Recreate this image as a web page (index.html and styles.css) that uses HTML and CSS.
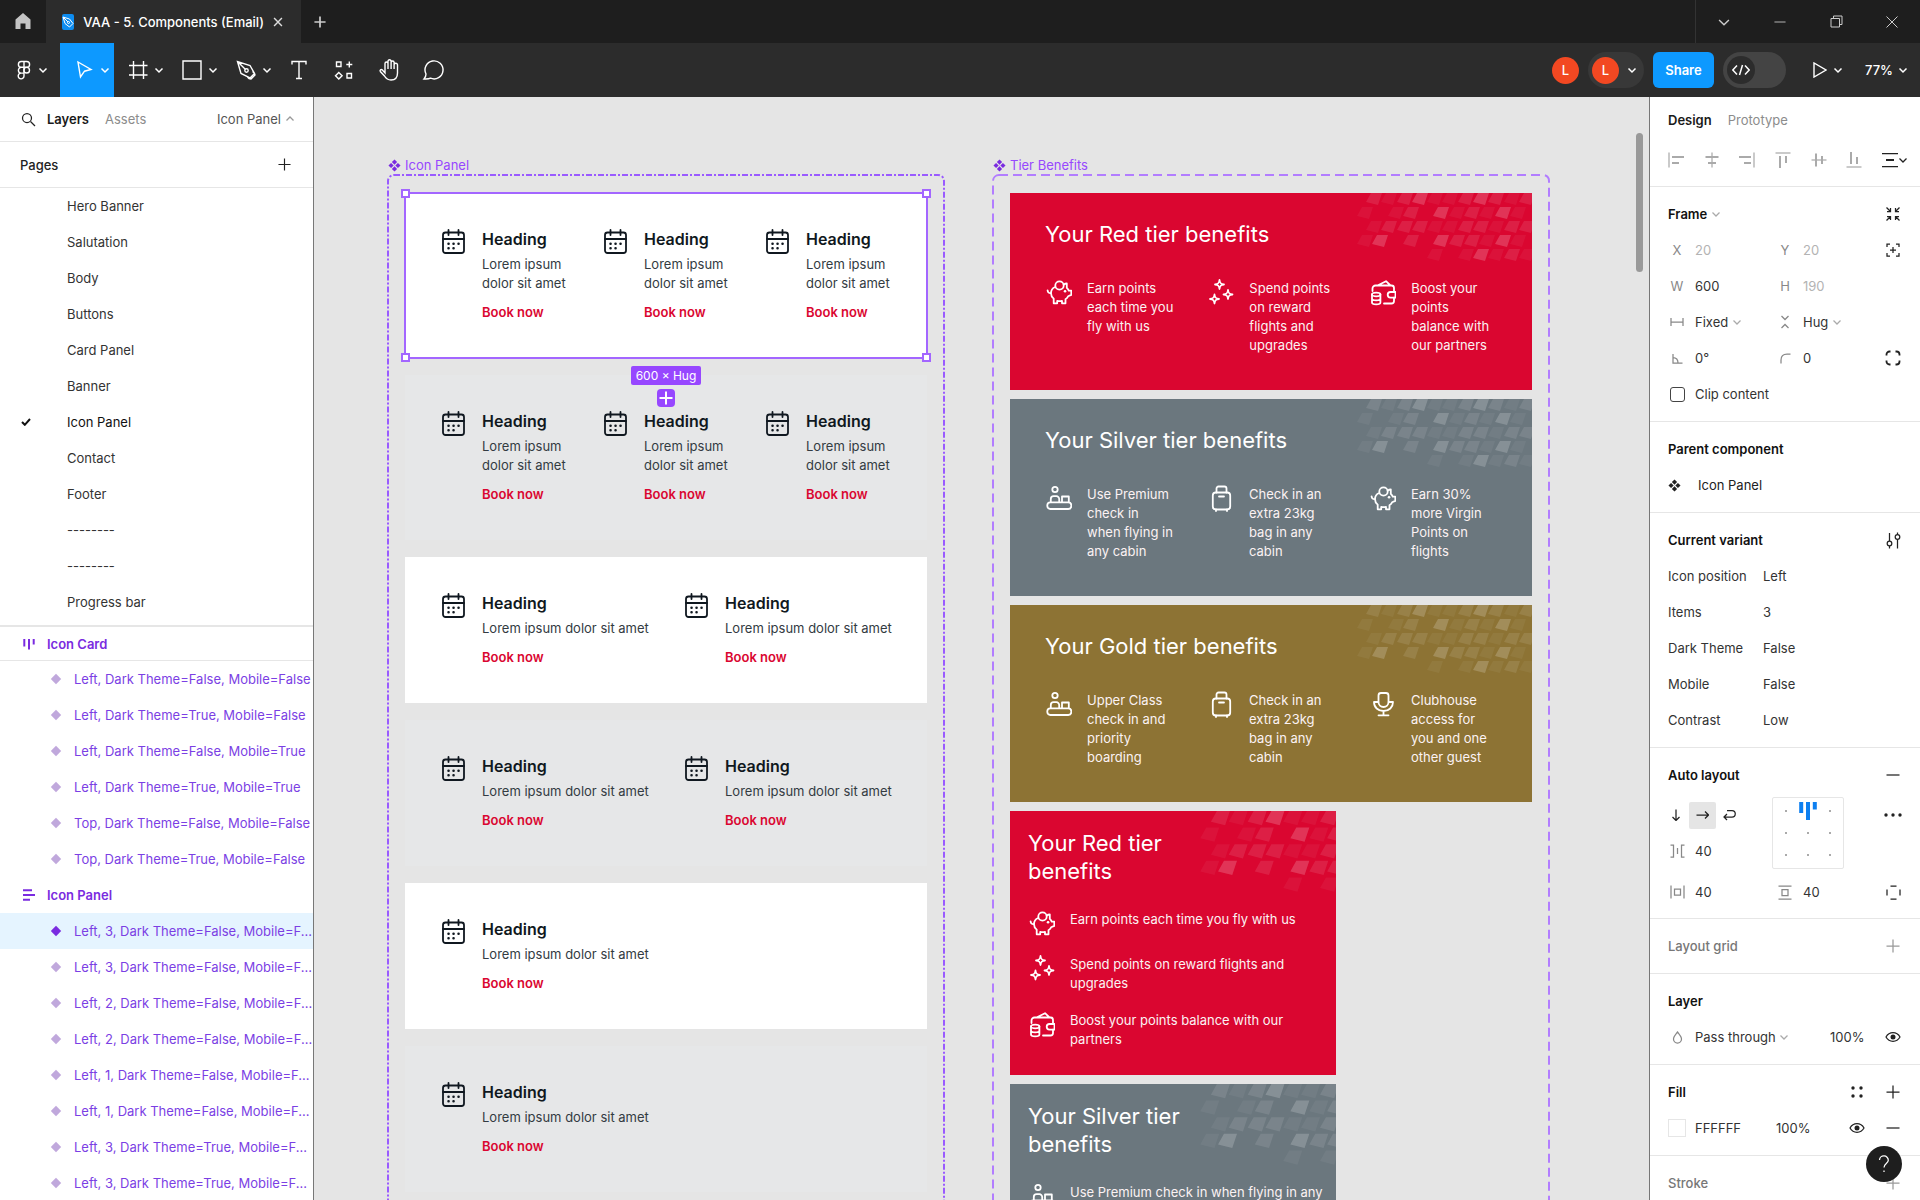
FILE: index.html
```
<!DOCTYPE html>
<html lang="en">
<head>
<meta charset="utf-8">
<title>VAA - 5. Components (Email)</title>
<link rel="stylesheet" href="styles.css">
</head>
<body>
<svg class="sprite" aria-hidden="true">
  <symbol id="chev" viewBox="0 0 10 10"><path d="M1.5 3.5 5 7l3.5-3.5"/></symbol>
  <symbol id="caret-up" viewBox="0 0 10 10"><path d="M1.5 6.5 5 3l3.5 3.5"/></symbol>
  <symbol id="plus" viewBox="0 0 14 14"><path d="M7 .5v13M.5 7h13"/></symbol>
  <symbol id="minus" viewBox="0 0 14 14"><path d="M.5 7h13"/></symbol>
  <symbol id="close" viewBox="0 0 14 14"><path d="m1.500 1.500 11 11m0-11-11 11"/></symbol>
  <symbol id="component" viewBox="0 0 14 14"><path class="solid" d="m7 .5 2.800 2.800L7 6.100 4.200 3.300zM7 7.900l2.800 2.800L7 13.500l-2.800-2.800zM3.300 4.200 6.100 7 3.300 9.800.5 7zM10.700 4.200 13.500 7l-2.800 2.800L7.900 7z"/></symbol>
  <symbol id="diamond" viewBox="0 0 12 12"><path class="solid" d="m6 .8 5.200 5.200L6 11.200.8 6z"/></symbol>
  <symbol id="eye" viewBox="0 0 16 12"><path d="M1 6c1.600-2.800 4-4.300 7-4.300S13.400 3.200 15 6c-1.600 2.800-4 4.300-7 4.300S2.600 8.800 1 6z"/><circle class="solid" cx="8" cy="6" r="2.500"/></symbol>
  <symbol id="calendar" viewBox="-.5 -1 27 27"><rect x="2.500" y="4.500" width="21" height="20.500" rx="2.500"/><path d="M2.500 11h21M8 2v5M18 2v5"/><path class="dots" d="M8 15.800h.1M13 15.800h.1M18 15.800h.1M8 20.300h.1M13 20.300h.1"/></symbol>
  <symbol id="piggy" viewBox="-1 0 27 27"><circle cx="13.500" cy="6.500" r="4.200"/><path d="M9.300 8C6.500 9 5 11.700 5 14.300c0 2.200 1 4 2.700 5.300v4.700h3.500v-2.400c1.500.3 3.300.3 4.800 0v2.400h3.500v-4.100c1.200-.8 2-1.700 2.600-2.900l3.200-1.400v-4.200h-2.500c-.5-1.300-1.100-2-2-2.900V4.500c-1.200 0-2.200.4-3.100 1.200M5 14c-2 .3-3.200-.5-3.400-2.600"/><path class="dots" d="M19 12.300h.1"/></symbol>
  <symbol id="sparkles" viewBox="-1 0 27 27"><path d="M11.500 1c.4 3.200 1.300 4.100 4.500 4.500-3.200.4-4.100 1.300-4.500 4.500-.4-3.200-1.300-4.100-4.500-4.500 3.200-.4 4.100-1.300 4.500-4.500zM20 11c.4 3.200 1.300 4.100 4.500 4.500-3.200.4-4.100 1.300-4.500 4.500-.4-3.200-1.300-4.100-4.500-4.500 3.200-.4 4.100-1.300 4.500-4.500zM6.500 15.500c.4 3.200 1.300 4.100 4.500 4.500-3.200.4-4.100 1.300-4.500 4.500-.4-3.200-1.300-4.100-4.500-4.500 3.200-.4 4.100-1.300 4.500-4.500z"/></symbol>
  <symbol id="wallet" viewBox="-1 0 27 27"><path d="M2.500 12V9.500a3 3 0 0 1 3-3h16a2.500 2.500 0 0 1 2.500 2.500v4M24 18.500V22a2.500 2.500 0 0 1-2.500 2.500H14M7.500 6.500 16 2.200l4.500 4.300M25.500 13h-5a2.800 2.800 0 0 0 0 5.600h5z"/><ellipse cx="6.200" cy="15.500" rx="4.200" ry="1.800"/><path d="M2 15.500v8c0 2.500 8.400 2.500 8.400 0v-8M2 19.500c0 2.500 8.400 2.500 8.400 0"/></symbol>
  <symbol id="desk" viewBox="-1 0 27 27"><circle cx="9" cy="4.500" r="2.700"/><rect x="1.300" y="17.300" width="24" height="6.700" rx="3"/><path d="M4.800 17v-3a2.800 2.800 0 0 1 2.800-2.800h2.800a2.800 2.800 0 0 1 2.800 2.800v3M16 17v-5.500h6.800V17"/></symbol>
  <symbol id="suitcase" viewBox="-1 0 27 27"><path d="M8.500 7.500v-4a2 2 0 0 1 2-2h6a2 2 0 0 1 2 2v4M11 11.500h5M8 24.500V26M19 24.500V26"/><rect x="4.800" y="7.500" width="17.400" height="17" rx="3"/></symbol>
  <symbol id="mic" viewBox="-1 0 27 27"><path d="M8.500 4.500a2.500 2.500 0 0 1 2.500-2.500h5a2.500 2.500 0 0 1 2.500 2.500V11a5 5 0 0 1-10 0z"/><path d="M8.300 11H4c0 5.300 4 9 9.500 9s9.500-3.700 9.500-9h-4.300M13.500 20v4.300M8.500 24.300h10"/></symbol>
  <symbol id="pattern" viewBox="0 0 175 70">
    <path class="dim" d="M29 0h11l-4 12-12-3zM75 0h11l-4 12-12-3zM90 0h11l-4 12-12-3zM152 0h11l-4 12-12-3zM5 14h11l-4 12-12-3zM36 14h11l-4 12-12-3zM97 14h11l-4 12-12-3zM127 14h11l-4 12-12-3zM158 14h11l-4 12-12-3zM14 28h11l-4 12-12-3zM75 28h11l-4 12-12-3zM90 28h11l-4 12-12-3zM136 28h11l-4 12-12-3zM5 42h11l-4 12-12-3zM127 42h11l-4 12-12-3zM158 42h11l-4 12-12-3zM75 56h11l-4 12-12-3zM106 56h11l-4 12-12-3zM136 56h11l-4 12-12-3zM167 56h11l-4 12-12-3z"/>
    <path class="mid" d="M14 0h11l-4 12-12-3zM45 0h11l-4 12-12-3zM106 0h11l-4 12-12-3zM136 0h11l-4 12-12-3zM167 0h11l-4 12-12-3zM51 14h11l-4 12-12-3zM112 14h11l-4 12-12-3zM29 28h11l-4 12-12-3zM45 28h11l-4 12-12-3zM60 28h11l-4 12-12-3zM106 28h11l-4 12-12-3zM121 28h11l-4 12-12-3zM152 28h11l-4 12-12-3zM167 28h11l-4 12-12-3zM51 42h11l-4 12-12-3zM97 42h11l-4 12-12-3zM112 42h11l-4 12-12-3zM152 56h11l-4 12-12-3z"/>
    <path class="bright" d="M60 0h11l-4 12-12-3zM121 0h11l-4 12-12-3zM81 14h11l-4 12-12-3zM143 14h11l-4 12-12-3zM20 42h11l-4 12-12-3zM81 42h11l-4 12-12-3zM143 42h11l-4 12-12-3zM121 56h11l-4 12-12-3z"/>
  </symbol>
</svg>

<header class="tabbar">
  <button class="home" aria-label="Home"><svg width="16" height="17" viewBox="0 0 16 17"><path d="M8 0 .5 6.500V16h5v-5.500h5V16h5V6.500z"/></svg></button>
  <div class="tab">
    <span class="file-icon"><svg width="12" height="12" viewBox="0 0 12 12"><path d="m1 1 2 6.500L7.500 11 11 7.500 7.500 3zM1.500 1.500l4.500 4.500"/><circle cx="6.500" cy="6.500" r="1"/></svg></span>
    <span>VAA - 5. Components (Email)</span>
    <button class="tab-close" aria-label="Close tab"><svg width="10" height="10"><use href="#close"/></svg></button>
  </div>
  <button class="new-tab" aria-label="New tab"><svg width="12" height="12"><use href="#plus"/></svg></button>
  <div class="window-controls">
    <button aria-label="Tabs"><svg width="14" height="14"><use href="#chev"/></svg></button>
    <button aria-label="Minimise"><svg width="12" height="12"><use href="#minus"/></svg></button>
    <button aria-label="Restore"><svg width="13" height="13" viewBox="0 0 13 13"><path d="M1 3.500h8.500V12H1zM3.500 3.500V1H12v8.500H9.500"/></svg></button>
    <button aria-label="Close"><svg width="14" height="14"><use href="#close"/></svg></button>
  </div>
</header>

<nav class="toolbar">
  <button class="tool main-menu" aria-label="Main menu"><svg class="glyph" width="24" height="24" viewBox="0 0 24 24"><path d="M12 3.500H9.300a2.900 2.900 0 0 0 0 5.800H12zM12 3.500h2.700a2.900 2.900 0 0 1 0 5.800H12zM12 9.300H9.300a2.900 2.900 0 0 0 0 5.800H12zM12 15.100H9.300a2.900 2.900 0 1 0 2.700 2.900z"/><circle cx="14.700" cy="12.200" r="2.800"/></svg><svg width="10" height="10"><use href="#chev"/></svg></button>
  <button class="tool active" aria-label="Move"><svg class="glyph" width="24" height="24" viewBox="0 0 24 24"><path d="m6 4 13 7.500-6.500 1.700L8.500 19z"/></svg><svg width="10" height="10"><use href="#chev"/></svg></button>
  <button class="tool" aria-label="Frame"><svg class="glyph" width="24" height="24" viewBox="0 0 24 24"><path d="M7.500 3v18M17.500 3v18M3 7.500h18.500M3 17h18.500"/></svg><svg width="10" height="10"><use href="#chev"/></svg></button>
  <button class="tool" aria-label="Rectangle"><svg class="glyph" width="24" height="24" viewBox="0 0 24 24"><path d="M3 3h18v18H3z"/></svg><svg width="10" height="10"><use href="#chev"/></svg></button>
  <button class="tool" aria-label="Pen"><svg class="glyph" width="24" height="24" viewBox="0 0 24 24"><path d="m3.500 3.500 3.500 12 9 4.500 4.500-4.500-4.500-8zM3.500 3.500l8 8M18.500 13.500c2 1.500 2.500 2.500 2.500 3.500l-4 4c-1.200 0-2.500-.5-3.500-2"/><circle cx="12.500" cy="12.500" r="1.700"/></svg><svg width="10" height="10"><use href="#chev"/></svg></button>
  <button class="tool single" aria-label="Text"><svg class="glyph" width="24" height="24" viewBox="0 0 24 24"><path d="M5 6.500v-3h14v3M12 3.500v17M9 20.500h6"/></svg></button>
  <button class="tool single" aria-label="Resources"><svg class="glyph" width="24" height="24" viewBox="0 0 24 24"><path d="M4.500 4h4.500v4.500H4.500zM15 15.500h4.500V20H15zM17.300 3.500v6M14.300 6.500h6M6.800 14.500l3.300 3.300-3.300 3.300-3.300-3.300z"/></svg></button>
  <button class="tool single" aria-label="Hand"><svg class="glyph" width="24" height="24" viewBox="0 0 24 24"><path d="M8 12V5.500a1.500 1.500 0 0 1 3 0V3a1.600 1.600 0 0 1 3.100 0v1.500a1.500 1.500 0 0 1 3 0V7a1.500 1.500 0 0 1 3.400 0v8c0 4-2 7-6.500 7-3.500 0-5-1.500-6.500-4L3.300 13.500c-.8-1.300.7-2.500 1.900-1.700L8 15zM11 5.500V11M14.100 4.500V11M17.100 7v4"/></svg></button>
  <button class="tool single" aria-label="Comment"><svg class="glyph" width="24" height="24" viewBox="0 0 24 24"><path d="M2 21c1.300-1.400 2-3 2-5a9 9 0 1 1 4.500 4.200C7 21 5 21.200 2 21z"/></svg></button>
  <div class="toolbar-right">
    <span class="avatar">L</span>
    <button class="avatar-group"><span class="avatar">L</span><svg width="10" height="10"><use href="#chev"/></svg></button>
    <button class="share">Share</button>
    <button class="dev-toggle" aria-label="Dev Mode"><span><svg width="18" height="12" viewBox="0 0 18 12"><path d="M5 1.500.8 6 5 10.500M13 1.500 17.200 6 13 10.500M10.500 1l-3 10"/></svg></span></button>
    <button class="present" aria-label="Present"><svg class="glyph" width="14" height="16" viewBox="0 0 14 16"><path d="M1 1v14l12-7z"/></svg><svg width="10" height="10"><use href="#chev"/></svg></button>
    <button class="zoom">77%<svg width="10" height="10"><use href="#chev"/></svg></button>
  </div>
</nav>

<div class="workspace">
  <aside class="left-panel">
    <div class="panel-tabs">
      <svg class="search" width="15" height="15" viewBox="0 0 15 15"><circle cx="6" cy="6" r="4.500"/><path d="m9.500 9.500 4.500 4.500"/></svg>
      <button class="current">Layers</button>
      <button>Assets</button>
      <button class="page-switch">Icon Panel<svg width="10" height="10"><use href="#caret-up"/></svg></button>
    </div>
    <div class="pages-title"><h2>Pages</h2><button aria-label="Add page"><svg width="13" height="13"><use href="#plus"/></svg></button></div>
    <ul class="pages">
      <li><a href="#">Hero Banner</a></li>
      <li><a href="#">Salutation</a></li>
      <li><a href="#">Body</a></li>
      <li><a href="#">Buttons</a></li>
      <li><a href="#">Card Panel</a></li>
      <li><a href="#">Banner</a></li>
      <li class="checked"><svg width="10" height="8" viewBox="0 0 10 8"><path d="m1 4 2.800 2.800L9 1"/></svg><a href="#">Icon Panel</a></li>
      <li><a href="#">Contact</a></li>
      <li><a href="#">Footer</a></li>
      <li><a href="#">--------</a></li>
      <li><a href="#">--------</a></li>
      <li><a href="#">Progress bar</a></li>
    </ul>
    <ul class="layers">
      <li class="group first"><svg width="12" height="12" viewBox="0 0 12 12"><path d="M1.300 1v7.500M6 1v10.500M10.700 1v5.500"/></svg><a href="#">Icon Card</a></li>
      <li><svg width="12" height="12"><use href="#diamond"/></svg><a href="#">Left, Dark Theme=False, Mobile=False</a></li>
      <li><svg width="12" height="12"><use href="#diamond"/></svg><a href="#">Left, Dark Theme=True, Mobile=False</a></li>
      <li><svg width="12" height="12"><use href="#diamond"/></svg><a href="#">Left, Dark Theme=False, Mobile=True</a></li>
      <li><svg width="12" height="12"><use href="#diamond"/></svg><a href="#">Left, Dark Theme=True, Mobile=True</a></li>
      <li><svg width="12" height="12"><use href="#diamond"/></svg><a href="#">Top, Dark Theme=False, Mobile=False</a></li>
      <li><svg width="12" height="12"><use href="#diamond"/></svg><a href="#">Top, Dark Theme=True, Mobile=False</a></li>
      <li class="group"><svg width="12" height="12" viewBox="0 0 12 12"><path d="M0 1.300h9M0 6h12M0 10.700h7"/></svg><a href="#">Icon Panel</a></li>
      <li class="selected"><svg width="12" height="12"><use href="#diamond"/></svg><a href="#">Left, 3, Dark Theme=False, Mobile=F...</a></li>
      <li><svg width="12" height="12"><use href="#diamond"/></svg><a href="#">Left, 3, Dark Theme=False, Mobile=F...</a></li>
      <li><svg width="12" height="12"><use href="#diamond"/></svg><a href="#">Left, 2, Dark Theme=False, Mobile=F...</a></li>
      <li><svg width="12" height="12"><use href="#diamond"/></svg><a href="#">Left, 2, Dark Theme=False, Mobile=F...</a></li>
      <li><svg width="12" height="12"><use href="#diamond"/></svg><a href="#">Left, 1, Dark Theme=False, Mobile=F...</a></li>
      <li><svg width="12" height="12"><use href="#diamond"/></svg><a href="#">Left, 1, Dark Theme=False, Mobile=F...</a></li>
      <li><svg width="12" height="12"><use href="#diamond"/></svg><a href="#">Left, 3, Dark Theme=True, Mobile=F...</a></li>
      <li><svg width="12" height="12"><use href="#diamond"/></svg><a href="#">Left, 3, Dark Theme=True, Mobile=F...</a></li>
    </ul>
  </aside>

  <main class="canvas">
    <section class="frame icon-frame">
      <h2 class="frame-label"><svg width="13" height="13"><use href="#component"/></svg>Icon Panel</h2>
      <div class="frame-body">
        <svg class="outline dense" width="100%" height="100%"><rect width="100%" height="100%" rx="6"/></svg>
        <article class="panel is-selected">
          <div class="item"><svg class="pic"><use href="#calendar"/></svg><div><h3>Heading</h3><p>Lorem ipsum<br>dolor sit amet</p><a href="#">Book now</a></div></div>
          <div class="item"><svg class="pic"><use href="#calendar"/></svg><div><h3>Heading</h3><p>Lorem ipsum<br>dolor sit amet</p><a href="#">Book now</a></div></div>
          <div class="item"><svg class="pic"><use href="#calendar"/></svg><div><h3>Heading</h3><p>Lorem ipsum<br>dolor sit amet</p><a href="#">Book now</a></div></div>
          <div class="selection"><i class="tl"></i><i class="tr"></i><i class="bl"></i><i class="br"></i></div>
          <div class="badges"><span class="size">600 × Hug</span><button class="add" aria-label="Add variant"><svg width="14" height="14"><use href="#plus"/></svg></button></div>
        </article>
        <article class="panel shaded">
          <div class="item"><svg class="pic"><use href="#calendar"/></svg><div><h3>Heading</h3><p>Lorem ipsum<br>dolor sit amet</p><a href="#">Book now</a></div></div>
          <div class="item"><svg class="pic"><use href="#calendar"/></svg><div><h3>Heading</h3><p>Lorem ipsum<br>dolor sit amet</p><a href="#">Book now</a></div></div>
          <div class="item"><svg class="pic"><use href="#calendar"/></svg><div><h3>Heading</h3><p>Lorem ipsum<br>dolor sit amet</p><a href="#">Book now</a></div></div>
        </article>
        <article class="panel">
          <div class="item"><svg class="pic"><use href="#calendar"/></svg><div><h3>Heading</h3><p>Lorem ipsum dolor sit amet</p><a href="#">Book now</a></div></div>
          <div class="item"><svg class="pic"><use href="#calendar"/></svg><div><h3>Heading</h3><p>Lorem ipsum dolor sit amet</p><a href="#">Book now</a></div></div>
        </article>
        <article class="panel shaded">
          <div class="item"><svg class="pic"><use href="#calendar"/></svg><div><h3>Heading</h3><p>Lorem ipsum dolor sit amet</p><a href="#">Book now</a></div></div>
          <div class="item"><svg class="pic"><use href="#calendar"/></svg><div><h3>Heading</h3><p>Lorem ipsum dolor sit amet</p><a href="#">Book now</a></div></div>
        </article>
        <article class="panel">
          <div class="item"><svg class="pic"><use href="#calendar"/></svg><div><h3>Heading</h3><p>Lorem ipsum dolor sit amet</p><a href="#">Book now</a></div></div>
        </article>
        <article class="panel shaded">
          <div class="item"><svg class="pic"><use href="#calendar"/></svg><div><h3>Heading</h3><p>Lorem ipsum dolor sit amet</p><a href="#">Book now</a></div></div>
        </article>
      </div>
    </section>

    <section class="frame tier-frame">
      <h2 class="frame-label"><svg width="13" height="13"><use href="#component"/></svg>Tier Benefits</h2>
      <div class="frame-body">
        <svg class="outline" width="100%" height="100%"><rect width="100%" height="100%" rx="6"/></svg>
        <article class="tier red">
          <svg class="pattern"><use href="#pattern"/></svg>
          <h3>Your Red tier benefits</h3>
          <div class="benefits">
            <div class="item"><svg class="pic"><use href="#piggy"/></svg><p>Earn points<br>each time you<br>fly with us</p></div>
            <div class="item"><svg class="pic"><use href="#sparkles"/></svg><p>Spend points<br>on reward<br>flights and<br>upgrades</p></div>
            <div class="item"><svg class="pic"><use href="#wallet"/></svg><p>Boost your<br>points<br>balance with<br>our partners</p></div>
          </div>
        </article>
        <article class="tier silver">
          <svg class="pattern"><use href="#pattern"/></svg>
          <h3>Your Silver tier benefits</h3>
          <div class="benefits">
            <div class="item"><svg class="pic"><use href="#desk"/></svg><p>Use Premium<br>check in<br>when flying in<br>any cabin</p></div>
            <div class="item"><svg class="pic"><use href="#suitcase"/></svg><p>Check in an<br>extra 23kg<br>bag in any<br>cabin</p></div>
            <div class="item"><svg class="pic"><use href="#piggy"/></svg><p>Earn 30%<br>more Virgin<br>Points on<br>flights</p></div>
          </div>
        </article>
        <article class="tier gold">
          <svg class="pattern"><use href="#pattern"/></svg>
          <h3>Your Gold tier benefits</h3>
          <div class="benefits">
            <div class="item"><svg class="pic"><use href="#desk"/></svg><p>Upper Class<br>check in and<br>priority<br>boarding</p></div>
            <div class="item"><svg class="pic"><use href="#suitcase"/></svg><p>Check in an<br>extra 23kg<br>bag in any<br>cabin</p></div>
            <div class="item"><svg class="pic"><use href="#mic"/></svg><p>Clubhouse<br>access for<br>you and one<br>other guest</p></div>
          </div>
        </article>
        <article class="tier mobile red">
          <svg class="pattern"><use href="#pattern"/></svg>
          <h3>Your Red tier<br>benefits</h3>
          <div class="benefits">
            <div class="item"><svg class="pic"><use href="#piggy"/></svg><p>Earn points each time you fly with us</p></div>
            <div class="item"><svg class="pic"><use href="#sparkles"/></svg><p>Spend points on reward flights and<br>upgrades</p></div>
            <div class="item"><svg class="pic"><use href="#wallet"/></svg><p>Boost your points balance with our<br>partners</p></div>
          </div>
        </article>
        <article class="tier mobile silver">
          <svg class="pattern"><use href="#pattern"/></svg>
          <h3>Your Silver tier<br>benefits</h3>
          <div class="benefits">
            <div class="item"><svg class="pic"><use href="#desk"/></svg><p>Use Premium check in when flying in any</p></div>
          </div>
        </article>
      </div>
    </section>
    <div class="scrollbar"></div>
  </main>

  <aside class="right-panel">
    <div class="panel-tabs"><button class="current">Design</button><button>Prototype</button></div>
    <div class="align-row">
      <button aria-label="Align left"><svg width="16" height="16" viewBox="0 0 16 16"><path d="M1 .5v15"/><path class="thick" d="M4 5h12M4 11h7"/></svg></button>
      <button aria-label="Align horizontal centers"><svg width="16" height="16" viewBox="0 0 16 16"><path d="M8 .5v15"/><path class="thick" d="M1.500 5h13M4 11h8"/></svg></button>
      <button aria-label="Align right"><svg width="16" height="16" viewBox="0 0 16 16"><path d="M15 .5v15"/><path class="thick" d="M0 5h12M5 11h7"/></svg></button>
      <button aria-label="Align top"><svg width="16" height="16" viewBox="0 0 16 16"><path d="M.5 1h15"/><path class="thick" d="M5 4v12M11 4v7"/></svg></button>
      <button aria-label="Align vertical centers"><svg width="16" height="16" viewBox="0 0 16 16"><path d="M.5 8h15"/><path class="thick" d="M5 1.500v13M11 4v8"/></svg></button>
      <button aria-label="Align bottom"><svg width="16" height="16" viewBox="0 0 16 16"><path d="M.5 15h15"/><path class="thick" d="M5 0v12M11 5v7"/></svg></button>
      <button class="dark" aria-label="Distribute"><svg width="16" height="16" viewBox="0 0 16 16"><path d="M0 1.500h16M0 14.500h16"/><path class="thick" d="M4 8h8"/></svg><svg width="10" height="10"><use href="#chev"/></svg></button>
    </div>

    <section class="props">
      <div class="title"><h2>Frame <svg class="faint" width="10" height="10"><use href="#chev"/></svg></h2><button aria-label="Resize to fit"><svg width="16" height="16" viewBox="0 0 16 16"><path d="m1.500 1.500 4 4M5.500 2v3.500H2M14.500 1.500l-4 4M10.500 2v3.500H14M1.500 14.500l4-4M5.500 14v-3.500H2M14.500 14.500l-4-4M10.500 14v-3.500H14"/></svg></button></div>
      <div class="fields">
        <label for="x">X</label><input id="x" class="muted" value="20">
        <label for="y">Y</label><input id="y" class="muted" value="20">
        <button aria-label="Absolute position"><svg width="16" height="16" viewBox="0 0 16 16"><path d="M2 5V2h3M11 2h3v3M14 11v3h-3M5 14H2v-3M8 5v6M5 8h6"/></svg></button>
      </div>
      <div class="fields">
        <label for="w">W</label><input id="w" value="600">
        <label for="h">H</label><input id="h" class="muted" value="190">
      </div>
      <div class="fields">
        <label for="hr"><svg width="14" height="10" viewBox="0 0 14 10"><path d="M1 1v8M13 1v8M1 5h12"/></svg></label><span class="pick"><select id="hr" aria-label="Horizontal resizing"><option>Fixed</option></select><svg class="faint" width="10" height="10"><use href="#chev"/></svg></span>
        <label for="vr"><svg width="10" height="14" viewBox="0 0 10 14"><path d="m1.500 1 3.500 3.500L8.500 1M1.500 13 5 9.500 8.500 13"/></svg></label><span class="pick"><select id="vr" aria-label="Vertical resizing"><option>Hug</option></select><svg class="faint" width="10" height="10"><use href="#chev"/></svg></span>
      </div>
      <div class="fields">
        <label for="rot"><svg width="11" height="11" viewBox="0 0 11 11"><path d="M1 1v9h9.500M1 4.500c3 0 5 2 5 5.500"/></svg></label><input id="rot" aria-label="Rotation" value="0°">
        <label for="rad"><svg width="11" height="11" viewBox="0 0 11 11"><path d="M1 10.500V7c0-4 2-6 6-6h3.500"/></svg></label><input id="rad" aria-label="Corner radius" value="0">
        <button aria-label="Independent corners"><svg width="16" height="16" viewBox="0 0 16 16"><path class="heavy" d="M1.500 5.500v-1a3 3 0 0 1 3-3h1M10.500 1.500h1a3 3 0 0 1 3 3v1M14.500 10.500v1a3 3 0 0 1-3 3h-1M5.500 14.500h-1a3 3 0 0 1-3-3v-1"/></svg></button>
      </div>
      <label class="check"><input type="checkbox">Clip content</label>
    </section>

    <section class="props">
      <div class="title"><h2>Parent component</h2></div>
      <a class="parent" href="#"><svg width="13" height="13"><use href="#component"/></svg>Icon Panel</a>
    </section>

    <section class="props">
      <div class="title"><h2>Current variant</h2><button aria-label="Edit properties"><svg width="15" height="17" viewBox="0 0 15 17"><path d="M3.500 1v8M3.500 14v2.500M11.500 16.500v-9M11.500 2.500V.5"/><circle cx="3.500" cy="11.500" r="2.300"/><circle cx="11.500" cy="5" r="2.300"/></svg></button></div>
      <dl class="variants">
        <dt>Icon position</dt><dd>Left</dd>
        <dt>Items</dt><dd>3</dd>
        <dt>Dark Theme</dt><dd>False</dd>
        <dt>Mobile</dt><dd>False</dd>
        <dt>Contrast</dt><dd>Low</dd>
      </dl>
    </section>

    <section class="props auto">
      <div class="title"><h2>Auto layout</h2><button aria-label="Remove auto layout"><svg width="14" height="14"><use href="#minus"/></svg></button></div>
      <div class="auto-body">
        <div class="directions">
          <button aria-label="Vertical"><svg width="12" height="12" viewBox="0 0 12 12"><path d="M6 .5v11M2.500 8 6 11.500 9.500 8"/></svg></button>
          <button class="on" aria-label="Horizontal"><svg width="13" height="12" viewBox="0 0 13 12"><path d="M.5 6h12M9 2.500 12.500 6 9 9.500"/></svg></button>
          <button aria-label="Wrap"><svg width="13" height="12" viewBox="0 0 13 12"><path d="M4 1.500h5a3.200 3.200 0 0 1 0 6.500H1M4 5 1 8l3 3"/></svg></button>
        </div>
        <div class="align-box"><i></i><svg width="18" height="18" viewBox="0 0 18 18"><path d="M2.200 0v11M9 0v18M15.800 0v7.500"/></svg><i></i><i></i><i></i><i></i><i></i><i></i><i></i></div>
        <button class="more" aria-label="More options"><svg width="18" height="4" viewBox="0 0 18 4"><circle class="solid" cx="2" cy="2" r="1.700"/><circle class="solid" cx="9" cy="2" r="1.700"/><circle class="solid" cx="16" cy="2" r="1.700"/></svg></button>
        <div class="gap-field"><label for="gap"><svg width="15" height="14" viewBox="0 0 15 14"><path d="M.5 1h3v12h-3M14.500 1h-3v12h3M7.500 4v6"/></svg></label><input id="gap" aria-label="Gap" value="40"></div>
      </div>
      <div class="fields">
        <label for="ph"><svg width="15" height="14" viewBox="0 0 15 14"><path d="M1 .5v13M14 .5v13M4.500 4h6v6h-6z"/></svg></label><input id="ph" aria-label="Horizontal padding" value="40">
        <label for="pv"><svg width="14" height="15" viewBox="0 0 14 15"><path d="M.5 1h13M.5 14h13M4 4.500h6v6H4z"/></svg></label><input id="pv" aria-label="Vertical padding" value="40">
        <button aria-label="Individual padding"><svg width="15" height="15" viewBox="0 0 15 15"><path d="M4.500 1h6M4.500 14h6M1 4.500v6M14 4.500v6"/></svg></button>
      </div>
    </section>

    <section class="props">
      <div class="title empty"><h2>Layout grid</h2><button aria-label="Add layout grid"><svg width="14" height="14"><use href="#plus"/></svg></button></div>
    </section>

    <section class="props">
      <div class="title"><h2>Layer</h2></div>
      <div class="blend">
        <label for="blend"><svg width="11" height="13" viewBox="0 0 11 13"><path d="M5.500 1C3.500 3.500 1.500 5.500 1.500 8a4 4 0 0 0 8 0c0-2.500-2-4.500-4-7z"/></svg></label><span class="pick"><select id="blend" aria-label="Blend mode"><option>Pass through</option></select><svg class="faint" width="10" height="10"><use href="#chev"/></svg></span>
        <input aria-label="Opacity" value="100%">
        <button aria-label="Toggle visibility"><svg width="16" height="12"><use href="#eye"/></svg></button>
      </div>
    </section>

    <section class="props">
      <div class="title"><h2>Fill</h2><button aria-label="Styles"><svg width="12" height="12" viewBox="0 0 12 12"><circle class="solid" cx="2" cy="2" r="1.700"/><circle class="solid" cx="10" cy="2" r="1.700"/><circle class="solid" cx="2" cy="10" r="1.700"/><circle class="solid" cx="10" cy="10" r="1.700"/></svg></button><button aria-label="Add fill"><svg width="14" height="14"><use href="#plus"/></svg></button></div>
      <div class="fill">
        <span class="swatch"></span><input aria-label="Fill colour" value="FFFFFF"><input aria-label="Fill opacity" value="100%">
        <div class="actions"><button aria-label="Toggle fill"><svg width="16" height="12"><use href="#eye"/></svg></button><button aria-label="Remove fill"><svg width="14" height="14"><use href="#minus"/></svg></button></div>
      </div>
    </section>

    <section class="props">
      <div class="title empty"><h2>Stroke</h2><button aria-label="Add stroke"><svg width="14" height="14"><use href="#plus"/></svg></button></div>
    </section>
    <button class="help" aria-label="Help"><svg width="12" height="18" viewBox="0 0 12 18"><path d="M1.500 5A4.300 4.300 0 0 1 6 1a4.200 4.200 0 0 1 4.300 4.200C10.300 8.500 6 8.500 6 12.500M6 15.500v1.500"/></svg></button>
  </aside>
</div>
</body>
</html>
```
FILE: styles.css
```
* { box-sizing: border-box; margin: 0; padding: 0; }
body {
  height: 100vh;
  display: flex;
  flex-direction: column;
  overflow: hidden;
  font: 13px/20px Inter, "Liberation Sans", sans-serif;
  color: #333;
}
button { border: 0; background: none; font: inherit; color: inherit; display: flex; align-items: center; justify-content: center; }
a { color: inherit; text-decoration: none; }
ul { list-style: none; }
input, select { border: 0; background: none; font: inherit; color: inherit; min-width: 0; outline: 0; }
select { appearance: none; }
svg { flex: none; fill: none; stroke: currentColor; stroke-width: 1.25px; display: block; }
.solid { fill: currentColor; stroke: none; }
.sprite { position: absolute; width: 0; height: 0; }

/* Window tabs */
.tabbar { flex: none; height: 43px; display: flex; background: #1e1e1e; color: #fff; }
.home { width: 46px; }
.home svg { fill: #c4c4c4; stroke: none; }
.tab { width: 255px; padding-left: 16px; display: flex; align-items: center; gap: 9px; background: #2c2c2c; font-weight: 500; white-space: nowrap; }
.file-icon { width: 16px; height: 16px; border-radius: 2px; background: #0d8cf0; display: flex; align-items: center; justify-content: center; }
.file-icon svg { stroke-width: 1px; }
.tab-close { margin: 0 18px 0 auto; color: #ddd; }
.new-tab { width: 38px; color: #ccc; }
.new-tab svg, .tab-close svg { stroke-width: 2px; }
.window-controls { margin-left: auto; display: flex; border-left: 1px solid #333; color: #ccc; }
.window-controls button { width: 56px; }
.window-controls svg { stroke-width: 1px; }

/* Toolbar */
.toolbar { flex: none; height: 54px; display: flex; background: #2c2c2c; color: #fff; }
.tool { width: 54px; padding-left: 12px; gap: 4px; justify-content: flex-start; }
.tool.main-menu { width: 60px; gap: 2px; }
.tool.active { background: #0d99ff; }
.tool.single { width: 45px; padding: 0; justify-content: center; }
.toolbar svg { stroke-width: 1.5px; }
.toolbar .glyph { stroke-width: 1.4px; }
.toolbar-right { margin-left: auto; padding-right: 12px; display: flex; align-items: center; gap: 9px; }
.avatar { width: 27px; height: 27px; border-radius: 50%; background: #f24822; font-weight: 500; line-height: 27px; text-align: center; }
.avatar-group { width: 56px; height: 36px; padding: 0 7px 0 4px; justify-content: space-between; border-radius: 18px; background: #383838; }
.share { width: 61px; height: 36px; border-radius: 6px; background: #0d99ff; font-weight: 600; }
.dev-toggle { width: 63px; height: 36px; padding: 4px; justify-content: flex-start; border-radius: 18px; background: #444; }
.dev-toggle span { width: 28px; height: 28px; border-radius: 50%; background: #2c2c2c; display: flex; align-items: center; justify-content: center; }
.present { gap: 6px; padding: 0 13px 0 18px; }
.zoom { gap: 5px; font-weight: 500; }

/* Workspace */
.workspace { flex: 1; min-height: 0; display: grid; grid-template-columns: 314px 1fr 271px; }
.left-panel { border-right: 1px solid #777; background: #fff; overflow: hidden; }
.panel-tabs { height: 45px; display: flex; align-items: center; gap: 16px; color: #8c8c8c; }
.panel-tabs .current { color: #1a1a1a; font-weight: 600; }
.left-panel .panel-tabs { padding: 0 18px 0 21px; border-bottom: 1px solid #e6e6e6; }
.search { margin-right: -5px; color: #222; }
.page-switch { margin-left: auto; gap: 4px; color: #555; }
.page-switch svg { color: #999; }
.pages-title { height: 46px; padding: 0 22px 0 20px; display: flex; align-items: center; justify-content: space-between; border-bottom: 1px solid #e6e6e6; color: #222; }
.pages-title h2 { font-size: 13px; font-weight: 500; }
.pages { padding-bottom: 5px; border-bottom: 2px solid #e6e6e6; }
.pages li { height: 36px; padding-left: 67px; display: flex; align-items: center; }
.pages .checked { padding-left: 21px; gap: 36px; color: #111; }
.checked svg { stroke-width: 2px; }
.layers li { height: 36px; padding-left: 50px; display: flex; align-items: center; gap: 12px; color: #7b3fe4; white-space: nowrap; }
.layers li svg { color: #c0a8dc; }
.layers .group { padding-left: 23px; gap: 12px; font-weight: 600; color: #7a2be0; }
.layers .group svg { color: inherit; stroke-width: 2px; }
.layers .first { height: 34px; border-bottom: 1px solid #e6e6e6; }
.layers .selected { background: #e5f4ff; }
.layers .selected svg { color: #7a2be0; }

/* Canvas */
.canvas { position: relative; overflow: hidden; background: #e5e5e5; }
.frame { position: absolute; top: 58px; width: 556px; }
.icon-frame { left: 74px; }
.tier-frame { left: 679px; }
.frame-label { height: 20px; display: flex; align-items: center; gap: 4px; font-size: 13px; font-weight: 400; color: #9747ff; }
.frame-label svg { color: #7a2be0; }
.frame-body { position: relative; min-height: 1100px; padding: 18px 17px 17px; display: flex; flex-direction: column; }
.outline { position: absolute; top: 0; left: 0; overflow: visible; color: #b27dff; stroke-width: 2px; stroke-dasharray: 9 5; }
.outline.dense { color: #9a5bff; stroke-dasharray: 6 2 2 2; }
.icon-frame .frame-body { gap: 17px; }
.tier-frame .frame-body { gap: 9px; }
.panel { position: relative; padding: 34px 35px 36px; display: grid; grid-auto-flow: column; grid-auto-columns: 1fr; gap: 34px; background: #fff; color: #101820; }
.panel.shaded { background: #e6e7e8; }
.item { display: flex; gap: 15px; white-space: nowrap; font-size: 13px; line-height: 19px; }
.pic { width: 27px; height: 27px; stroke-width: 1.8px; stroke-linecap: round; stroke-linejoin: round; }
.dots { stroke-width: 2.5px; stroke-linecap: round; }
.panel h3 { font-size: 16px; line-height: 24px; font-weight: 600; }
.panel p { margin: 4px 0 10px; color: #333b42; }
.panel a { display: block; font-weight: 600; color: #da0630; }
.selection { position: absolute; inset: -1px; border: 2px solid #a366ff; }
.selection i { position: absolute; width: 9px; height: 9px; border: 2px solid #a366ff; background: #fff; }
.tl, .tr { top: -5px; }
.bl, .br { bottom: -5px; }
.tl, .bl { left: -5px; }
.tr, .br { right: -5px; }
.badges { position: absolute; z-index: 1; top: 100%; left: 0; right: 0; padding-top: 8px; display: flex; flex-direction: column; align-items: center; gap: 4px; color: #fff; }
.size { height: 19px; padding: 0 5px; border-radius: 2px; background: #9747ff; font-size: 12px; line-height: 19px; }
.add { width: 18px; height: 18px; border-radius: 4px; background: #9747ff; }
.add svg { stroke-width: 2px; }
.tier { position: relative; overflow: hidden; padding: 26px 35px 35px; color: #fff; }
.red { background: #da0630; }
.silver { background: #6b777e; }
.gold { background: #8d7334; }
.tier h3 { margin-bottom: 30px; font-size: 22px; line-height: 30px; font-weight: 400; }
.benefits { display: grid; grid-template-columns: repeat(3, 1fr); gap: 34px; min-height: 76px; }
.tier .item { color: #fbf2f3; }
.tier .pic { color: #fff; }
.pattern { position: absolute; top: 0; left: 347px; width: 175px; height: 70px; stroke: none; fill: #fff; }
.dim { opacity: .05; }
.mid { opacity: .1; }
.bright { opacity: .19; }
.tier.mobile { width: 326px; padding: 18px 18px 26px; }
.tier.mobile h3 { margin-bottom: 25px; line-height: 28px; }
.mobile .benefits { grid-template-columns: 1fr; gap: 18px; }
.mobile .pattern { left: 190px; width: 208px; height: 83px; }
.scrollbar { position: absolute; top: 36px; right: 6px; width: 7px; height: 139px; border-radius: 4px; background: #999; }

/* Inspector */
.right-panel { position: relative; border-left: 1px solid #777; background: #fff; overflow: hidden; }
.right-panel .panel-tabs { padding-left: 18px; }
.align-row { height: 45px; padding: 0 12px 9px 18px; display: flex; align-items: center; justify-content: space-between; border-bottom: 1px solid #e6e6e6; color: #aaa; }
.align-row .dark { color: #222; }
.thick { stroke-width: 2px; }
.heavy { stroke-width: 1.8px; }
.props { padding: 9px 16px 9px 18px; border-bottom: 1px solid #e6e6e6; }
.title { height: 36px; display: flex; align-items: center; gap: 14px; color: #222; }
.title h2 { margin-right: auto; display: flex; align-items: center; gap: 4px; font-size: 13px; font-weight: 600; color: #111; }
.title button, .fields button, .fill button, .blend button, .more { width: 22px; height: 22px; color: #222; }
.title.empty h2 { font-weight: 500; color: #777; }
.title.empty button { color: #999; }
.faint { color: #aaa; }
.fields { height: 36px; display: grid; grid-template-columns: 18px 72px 18px 1fr 22px; column-gap: 9px; align-items: center; }
.fields label, .gap-field label, .blend label { display: flex; justify-content: center; color: #888; }
.fields label, .gap-field label { width: 18px; }
.muted { color: #b3b3b3; }
.pick { display: flex; align-items: center; gap: 3px; }
.check { height: 36px; display: flex; align-items: center; gap: 10px; }
.check input { appearance: none; width: 15px; height: 15px; margin-left: 2px; border: 1px solid #444; border-radius: 3px; }
.parent { height: 36px; display: flex; align-items: center; gap: 17px; color: #222; }
.variants { display: grid; grid-template-columns: 95px 1fr; line-height: 36px; }
.auto { padding-bottom: 8px; }
.auto-body { padding: 4px 0 5px; display: grid; grid-template-columns: 99px 1fr 22px; grid-template-rows: 36px 36px; align-items: center; }
.directions { display: flex; margin-left: -6px; color: #222; }
.directions button { width: 27px; height: 27px; border-radius: 2px; }
.directions .on { background: #e5e5e5; }
.align-box { grid-row: 1 / 3; grid-column: 2; width: 72px; height: 72px; padding: 2px; display: grid; grid-template-columns: repeat(3, 1fr); grid-template-rows: repeat(3, 1fr); place-items: center; border: 1px solid #e6e6e6; border-radius: 2px; margin-left: 5px; }
.align-box i { width: 2px; height: 2px; background: #aaa; }
.align-box svg { color: #0d7ff0; stroke-width: 4px; }
.more { grid-column: 3; grid-row: 1; }
.gap-field { grid-row: 2; display: grid; grid-template-columns: 18px 1fr; column-gap: 9px; align-items: center; }
.blend { height: 36px; display: grid; grid-template-columns: 18px 126px 1fr 22px; column-gap: 9px; align-items: center; }
.fill { height: 36px; display: grid; grid-template-columns: 18px 72px 1fr 58px; column-gap: 9px; align-items: center; }
.actions { display: flex; justify-content: space-between; }
.swatch { width: 18px; height: 18px; border: 1px solid #e6e6e6; }
.help { position: absolute; right: 18px; bottom: 18px; width: 36px; height: 36px; border-radius: 50%; background: #1e1e1e; color: #fff; }
```
